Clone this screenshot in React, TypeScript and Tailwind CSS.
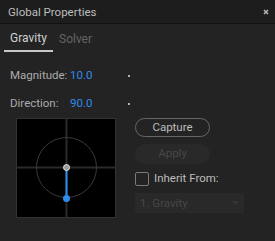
import React from 'react'

const font = { fontFamily: 'Roboto, "Open Sans", Arial, sans-serif' }

function Dial() {
  return (
    <svg width="100" height="100" viewBox="0 0 100 100" className="block">
      <rect x="0.5" y="0.5" width="99" height="99" fill="#000" stroke="#333" />
      <line x1="50.5" y1="1" x2="50.5" y2="99" stroke="#2a2a2a" strokeWidth="2" />
      <line x1="1" y1="49.5" x2="99" y2="49.5" stroke="#2a2a2a" strokeWidth="2" />
      <circle cx="50.5" cy="49.5" r="30" fill="none" stroke="#3a3a3a" strokeWidth="1" />
      <line x1="50.5" y1="50" x2="50.5" y2="80" stroke="#2d8ceb" strokeWidth="2" />
      <circle cx="50.5" cy="80.5" r="3.5" fill="#2d8ceb" />
      <circle cx="50.5" cy="49.5" r="3" fill="#9a9a9a" stroke="#e0e0e0" strokeWidth="1" />
    </svg>
  )
}

export default function App() {
  return (
    <div className="w-[275px] h-[241px] bg-[#232323] text-[11.5px] overflow-hidden" style={font}>
      {/* Title bar */}
      <div className="h-6 bg-[#1d1d1d] border-b border-[#111] flex items-center justify-between pl-2 pr-[4px] pt-[3px]">
        <span className="text-[#bcbcbc]">Global Properties</span>
        <svg width="6" height="6" viewBox="0 0 6 6" className="mr-[2px] -mt-[3px]">
          <path d="M1 1 L5 5 M5 1 L1 5" stroke="#b4b4b4" strokeWidth="1.6" />
        </svg>
      </div>

      {/* Tabs */}
      <div className="flex h-7 pl-1">
        <div className="w-[49px] border-b-2 border-[#c8c8c8] flex items-center justify-center text-[12px] text-[#d0d0d0] pt-[1px]">Gravity</div>
        <div className="px-[6px] flex items-center text-[12px] text-[#646464] pt-[1px]">Solver</div>
      </div>

      {/* Fields */}
      <div className="pt-[10px]">
        <div className="h-7 flex items-center pl-[10px]">
          <span className="w-[60px] text-[#acacac]">Magnitude:</span>
          <span className="w-[58px] text-[#2d8ceb]">10.0</span>
          <span className="w-[2px] h-[2px] bg-[#b0b0b0]" />
        </div>
        <div className="h-7 flex items-center pl-[10px]">
          <span className="w-[60px] text-[#acacac]">Direction:</span>
          <span className="w-[58px] text-[#2d8ceb]">90.0</span>
          <span className="w-[2px] h-[2px] bg-[#b0b0b0]" />
        </div>
      </div>

      <div className="flex pl-4 gap-[19px]">
        <Dial />
        <div className="flex flex-col">
          <button className="w-[75px] h-[19px] rounded-full border border-[#666] text-[#bcbcbc] leading-none">
            Capture
          </button>
          <button className="mt-[7px] w-[75px] h-[20px] rounded-full bg-[#292929] text-[#474747] leading-none">
            Apply
          </button>
          <div className="mt-[6px] flex items-center gap-[5px]">
            <span className="w-[14px] h-[14px] border border-[#7a7a7a] rounded-[2px]" />
            <span className="text-[#bcbcbc]">Inherit From:</span>
          </div>
          <div className="mt-[6px] w-[109px] h-[20px] bg-[#292929] flex items-center justify-between px-[5px]">
            <span className="text-[#474747]">1. Gravity</span>
            <svg width="7" height="4" viewBox="0 0 7 4">
              <path d="M0 0 L7 0 L3.5 4 Z" fill="#353535" />
            </svg>
          </div>
        </div>
      </div>
    </div>
  )
}
